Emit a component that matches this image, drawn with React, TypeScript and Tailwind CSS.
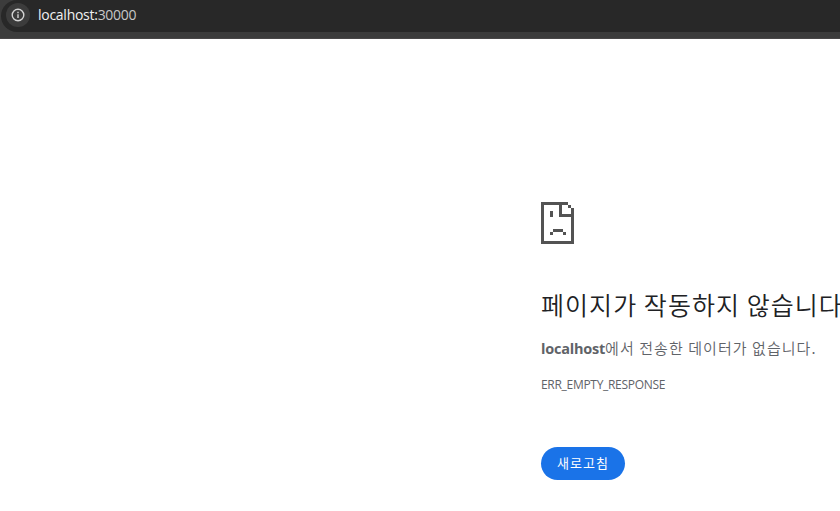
const LATIN = "font-['Open_Sans','Noto_Sans_CJK_KR',sans-serif]";

function InfoIcon() {
  return (
    <svg width="14" height="14" viewBox="0 0 14 14" fill="none" stroke="#d4d4d4">
      <circle cx="7" cy="7" r="5.8" strokeWidth="1.4" />
      <path d="M7 6.2V10" strokeWidth="1.4" />
      <path d="M7 3.8V5.2" strokeWidth="1.4" />
    </svg>
  );
}

function SadPageIcon() {
  return (
    <svg width="33" height="42" viewBox="0 0 33 42" fill="#535353" shapeRendering="crispEdges">
      <path d="M0 0H27V3H21V12H33V42H0ZM3 3V39H30V15H18V3Z" fillRule="evenodd" />
      <path d="M27 3H30V6H27ZM30 6H33V12H30Z" />
      <path d="M9 9H12V15H9ZM12 27H22V30H12ZM9 30H12V33H9ZM22 30H25V33H22Z" />
    </svg>
  );
}

export default function App() {
  return (
    <div className={`flex h-[511px] w-[840px] flex-col overflow-hidden bg-white ${LATIN}`}>
      <header className="h-[39px] shrink-0 border-b border-[#494748] bg-[#3c3c3c]">
        <div className="ml-px flex h-8 w-[860px] items-center rounded-l-full bg-[#282828] pb-[2px] pl-[5px]">
          <span className="flex size-6 items-center justify-center rounded-full bg-[#3c3c3c]">
            <InfoIcon />
          </span>
          <span className="ml-2 whitespace-nowrap text-[14px] leading-5 tracking-[-0.27px] text-[#c7c7c7]">
            <span className="text-[#f0f0f0]">localhost:</span>30000
          </span>
        </div>
      </header>
      <main className="flex flex-col items-start pl-[541px] pt-[163px]">
        <SadPageIcon />
        <h1 className="mt-[42px] h-9 whitespace-nowrap font-['Noto_Sans_CJK_KR',sans-serif] text-[25px] font-[350] leading-9 tracking-[1.05px] text-[#202124]">
          페이지가 작동하지 않습니다
        </h1>
        <p className="mt-[14px] h-6 whitespace-nowrap text-[15px] leading-6 text-[#5f6368]">
          <strong className="text-[14.5px] font-bold tracking-[-0.22px]">localhost</strong>
          <span className="font-['Noto_Sans_CJK_KR',sans-serif] font-[350] tracking-[1.06px]">에서 전송한 데이터가 없습니다.</span>
        </p>
        <p className="mt-[15px] h-5 whitespace-nowrap text-[12px] leading-5 tracking-[-0.3px] text-[#5f6368]">
          ERR_EMPTY_RESPONSE
        </p>
        <button className="mt-[52px] flex h-[33px] w-[84px] items-center justify-center rounded-full bg-[#1a73e8] pb-px font-['Noto_Sans_CJK_KR',sans-serif] text-[13px] tracking-[1px] text-white">
          새로고침
        </button>
      </main>
    </div>
  );
}
